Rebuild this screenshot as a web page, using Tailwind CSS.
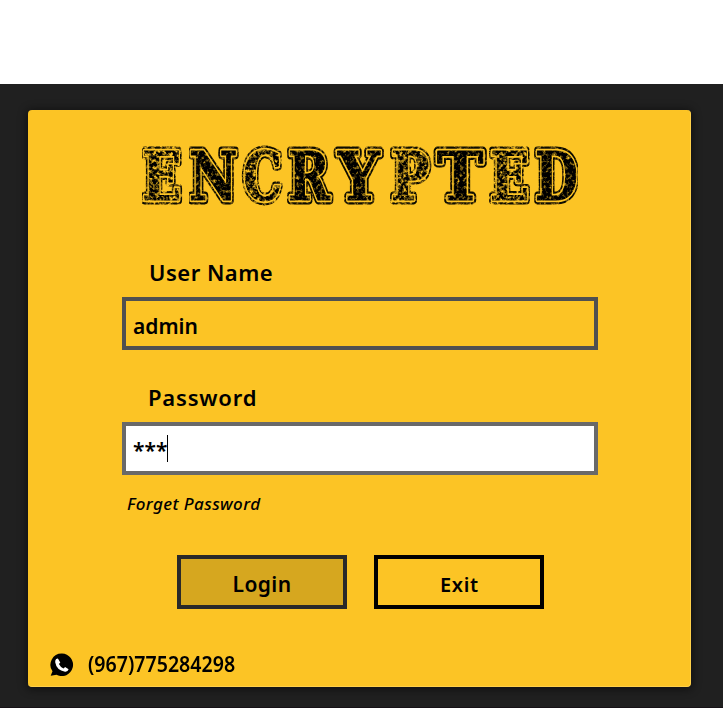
<!DOCTYPE html>
<html lang="en">
<head>
<meta charset="utf-8">
<title>Login</title>
<script src="https://cdn.jsdelivr.net/npm/@tailwindcss/browser@4"></script>
</head>
<body class="bg-white pt-[84px] h-[716px] overflow-hidden text-black">
<main class="w-[723px] h-[624px] bg-[#202020] pt-[26px] pl-[28px] border-b border-[#171217]">
<section class="w-[663px] h-[577px] rounded-[4px] bg-[#fcc425] border-r border-b border-[#ffd04a] shadow-[0_1px_9px_2px_rgba(0,0,0,0.45)] flex flex-col font-['Noto_Sans',sans-serif] font-semibold">
  <svg class="ml-[108px] mt-[32px] shrink-0" width="448" height="66" viewBox="136 142 448 66" role="img" aria-label="ENCRYPTED">
    <defs>
      <filter id="worn" x="0" y="0" width="100%" height="100%">
        <feTurbulence type="fractalNoise" baseFrequency="0.3" numOctaves="3" seed="8" result="n"/>
        <feColorMatrix in="n" type="matrix" values="0 0 0 0 0  0 0 0 0 0  0 0 0 0 0  2.4 0 0 0 -0.2" result="m"/>
        <feComposite in="SourceGraphic" in2="m" operator="in"/>
      </filter>
      <filter id="faded" x="0" y="0" width="100%" height="100%">
        <feTurbulence type="fractalNoise" baseFrequency="0.3" numOctaves="3" seed="21" result="n"/>
        <feColorMatrix in="n" type="matrix" values="0 0 0 0 0  0 0 0 0 0  0 0 0 0 0  3 0 0 0 -0.75" result="m"/>
        <feComposite in="SourceGraphic" in2="m" operator="in"/>
      </filter>
      <g id="solid" font-family="DejaVu Serif" font-weight="700" font-size="67">
        <text transform="translate(189 199.500) scale(.79 1)">N</text>
        <text transform="translate(288 199.500) scale(.75 1)">R</text>
        <text transform="translate(338 199.500) scale(.87 1)">Y</text>
        <text transform="translate(437 199.500) scale(.93 1)">T</text>
        <text transform="translate(535 199.500) scale(.74 1)">D</text>
      </g>
      <g id="light" font-family="DejaVu Serif" font-weight="700" font-size="67">
        <text transform="translate(142 199.500) scale(.77 1)">E</text>
        <text transform="translate(243 199.500) scale(.73 1)">C</text>
        <text transform="translate(391 199.500) scale(.76 1)">P</text>
        <text transform="translate(490 199.500) scale(.77 1)">E</text>
      </g>
    </defs>
    <g filter="url(#worn)">
      <use href="#solid" stroke="#0a0800" stroke-width="8.800" stroke-linejoin="round"/>
      <use href="#solid" stroke="#fcc425" stroke-width="4.600" stroke-linejoin="round"/>
      <use href="#solid" fill="#000" stroke="#000" stroke-width="1.200"/>
    </g>
    <g filter="url(#faded)">
      <use href="#light" stroke="#0a0800" stroke-width="8.800" stroke-linejoin="round"/>
      <use href="#light" stroke="#fcc425" stroke-width="4.600" stroke-linejoin="round"/>
      <use href="#light" fill="#000" stroke="#000" stroke-width="1.200"/>
    </g>
  </svg>
  <form class="flex flex-col pl-[94px]">
    <label class="ml-[27px] mt-[48px] h-[32px] leading-[32px] text-[22px] tracking-[.5px]">User Name</label>
    <div class="mt-[9px] w-[476px] h-[53px] border-4 border-[#505050] pl-[7px] leading-[50px] text-[21px]">admin</div>
    <label class="mt-[31px] ml-[26px] h-[32px] leading-[32px] text-[22px] tracking-[.8px]">Password</label>
    <div class="mt-[9px] w-[476px] h-[53px] border-4 border-[#696969] bg-white pl-[7px] flex items-center text-[21px]"><span class="pt-[5px]">***</span><span class="w-px h-[27px] bg-black"></span></div>
    <a class="mt-[14px] ml-[5px] h-[30px] leading-[30px] text-[17px] tracking-[.4px] font-medium italic">Forget Password</a>
    <div class="mt-[36px] ml-[55px] flex gap-[27.400px]">
      <div class="w-[170px] h-[54px] border-4 border-[#292929] bg-[#d6a71f] text-center leading-[51px] text-[21px] tracking-[.4px]">Login</div>
      <div class="w-[170px] h-[54px] border-4 border-black text-center leading-[51px] text-[20px] tracking-[.6px]">Exit</div>
    </div>
  </form>
  <div class="mt-[38px] ml-[21px] h-[32px] flex items-center">
    <svg width="26" height="26" viewBox="0 0 26 26"><path d="M13 3.500A11.300 11.300 0 1 1 7.500 24.800L1.700 25.800L3.500 21.300A11.300 11.300 0 0 1 13 3.500Z" fill="#000"/><path d="M7.100 9.100L8.900 8.500L11.300 12.400L9.900 14Q11.400 17.200 14.500 18.400L16.100 17L19.600 19.300Q18.800 22 16 21.700Q7.500 20.200 6.200 12.200Q6 10.300 7.100 9.100Z" fill="#fff"/></svg>
    <span class="ml-[13px] text-[22px] origin-left scale-x-[.89]">(967)775284298</span>
  </div>
</section>
</main>
</body>
</html>
